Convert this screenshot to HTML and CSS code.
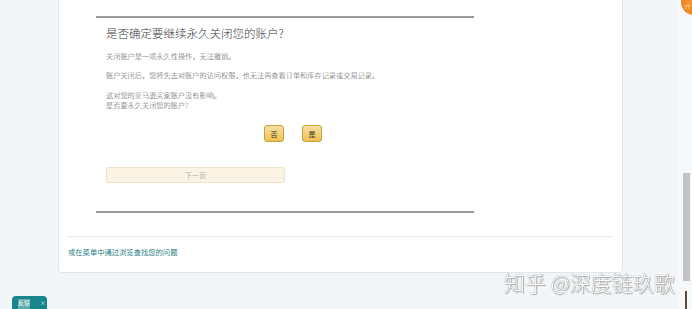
FILE: index.html
```html
<!DOCTYPE html>
<html lang="zh">
<head>
    <meta charset="UTF-8">
    <title>关闭账户</title>
    <link rel="stylesheet" href="styles.css">
</head>
<body>
    <div class="page">
        <div class="card">
            <div class="dialog">
                <h1 class="title">是否确定要继续永久关闭您的账户?</h1>
                <p class="p1">关闭账户是一项永久性操作，无法撤销。</p>
                <p class="p2">账户关闭后，您将失去对账户的访问权限，也无法再查看订单和库存记录或交易记录。</p>
                <p class="p3">这对您的亚马逊买家账户没有影响。<br>是否要永久关闭您的账户?</p>
                <div class="choices">
                    <button class="btn-yellow">否</button>
                    <button class="btn-yellow">是</button>
                </div>
                <button class="btn-next">下一页</button>
            </div>
            <div class="sep"></div>
            <a class="help-link" href="#">或在菜单中通过浏览查找您的问题</a>
        </div>
    </div>

    <div class="scroll-track"><div class="scroll-thumb"></div></div>
    <div class="resize-mark"></div>
    <div class="badge">77</div>
    <div class="feedback"><span class="fb-label">反馈</span><span class="fb-close">×</span></div>
    <div class="watermark">知乎 @深度链玖歌</div>
</body>
</html>
```

FILE: styles.css
```css
html, body {
    margin: 0;
    height: 309px;
    overflow: hidden;
}

body {
    background: #f3f6f8;
    font-family: "Noto Sans CJK SC", "Noto Sans", sans-serif;
    color: #555;
}

.page {
    padding-left: 58px;
}

.card {
    box-sizing: border-box;
    width: 565px;
    height: 273px;
    padding-top: 16px;
    background: #fff;
    border: 1px solid #e1e6e9;
    border-top: none;
    border-radius: 0 0 4px 4px;
}

.dialog {
    box-sizing: border-box;
    margin-left: 37px;
    width: 378px;
    height: 197px;
    padding-left: 10px;
    border-top: 2px solid #9b9b9b;
    border-bottom: 2px solid #9b9b9b;
}

.title {
    margin: 8px 0 0;
    font-size: 11.5px;
    line-height: 14px;
    font-weight: 300;
    color: #3a3a3a;
}

.dialog p {
    margin: 0;
    font-size: 7.2px;
    line-height: 10px;
    font-weight: 300;
    color: #555;
}

.dialog .p1 { margin-top: 11px; }
.dialog .p2 { margin-top: 9px; }
.dialog .p3 { margin-top: 10px; }

.choices {
    display: flex;
    gap: 18px;
    margin: 15px 0 0 158px;
}

.btn-yellow {
    width: 20px;
    height: 17px;
    padding: 0;
    font-family: inherit;
    font-size: 7px;
    color: #333;
    background: linear-gradient(#f7dfa5, #f0c14b);
    border: 1px solid #c9a13a;
    border-radius: 3px;
}

.btn-next {
    display: block;
    margin-top: 25px;
    width: 179px;
    height: 16px;
    padding: 0;
    font-family: inherit;
    font-size: 7px;
    color: #b5b0a5;
    background: #fbf4e4;
    border: 1px solid #ede3cc;
    border-radius: 2px;
}

.sep {
    margin: 23px 0 0 9px;
    width: 544px;
    border-top: 1px solid #e8e8e8;
}

.help-link {
    display: block;
    margin: 10px 0 0 9px;
    font-size: 7.3px;
    line-height: 10px;
    color: #2a7f86;
    text-decoration: none;
}

/* overlays */
.scroll-track {
    position: fixed;
    top: 0;
    right: 0;
    width: 14px;
    height: 309px;
    background: #f6f8f9;
}

.scroll-thumb {
    position: absolute;
    top: 173px;
    left: 5px;
    width: 7px;
    height: 108px;
    background: #c3c3c3;
}

.resize-mark {
    position: fixed;
    left: 685px;
    top: 291px;
    width: 2px;
    height: 18px;
    background: #5b4a3c;
}

.badge {
    position: fixed;
    left: 681px;
    top: -11px;
    width: 26px;
    height: 26px;
    border-radius: 50%;
    background: radial-gradient(circle at 40% 60%, #f7962f, #e27416);
    color: #fff;
    font-size: 5px;
    font-style: italic;
    line-height: 6px;
    padding: 15px 0 0 3px;
    box-sizing: border-box;
}

.feedback {
    position: fixed;
    left: 12px;
    top: 296px;
    width: 35px;
    height: 17px;
    box-sizing: border-box;
    padding: 3px 0 0 6px;
    display: flex;
    gap: 10px;
    background: #16858c;
    border-radius: 4px 4px 0 0;
    color: #fff;
    font-size: 6px;
    line-height: 8px;
}

.fb-label {
    background: rgba(255, 255, 255, 0.3);
}

.fb-close {
    color: #d6eeee;
}

.watermark {
    position: fixed;
    left: 504px;
    top: 269px;
    font-size: 21px;
    line-height: 26px;
    font-weight: 300;
    color: #fff;
    white-space: nowrap;
    text-shadow: 0 0 1px #8a8a8a, 0 0 1px #8a8a8a, 1px 1px 1px #b0b0b0;
}
```
